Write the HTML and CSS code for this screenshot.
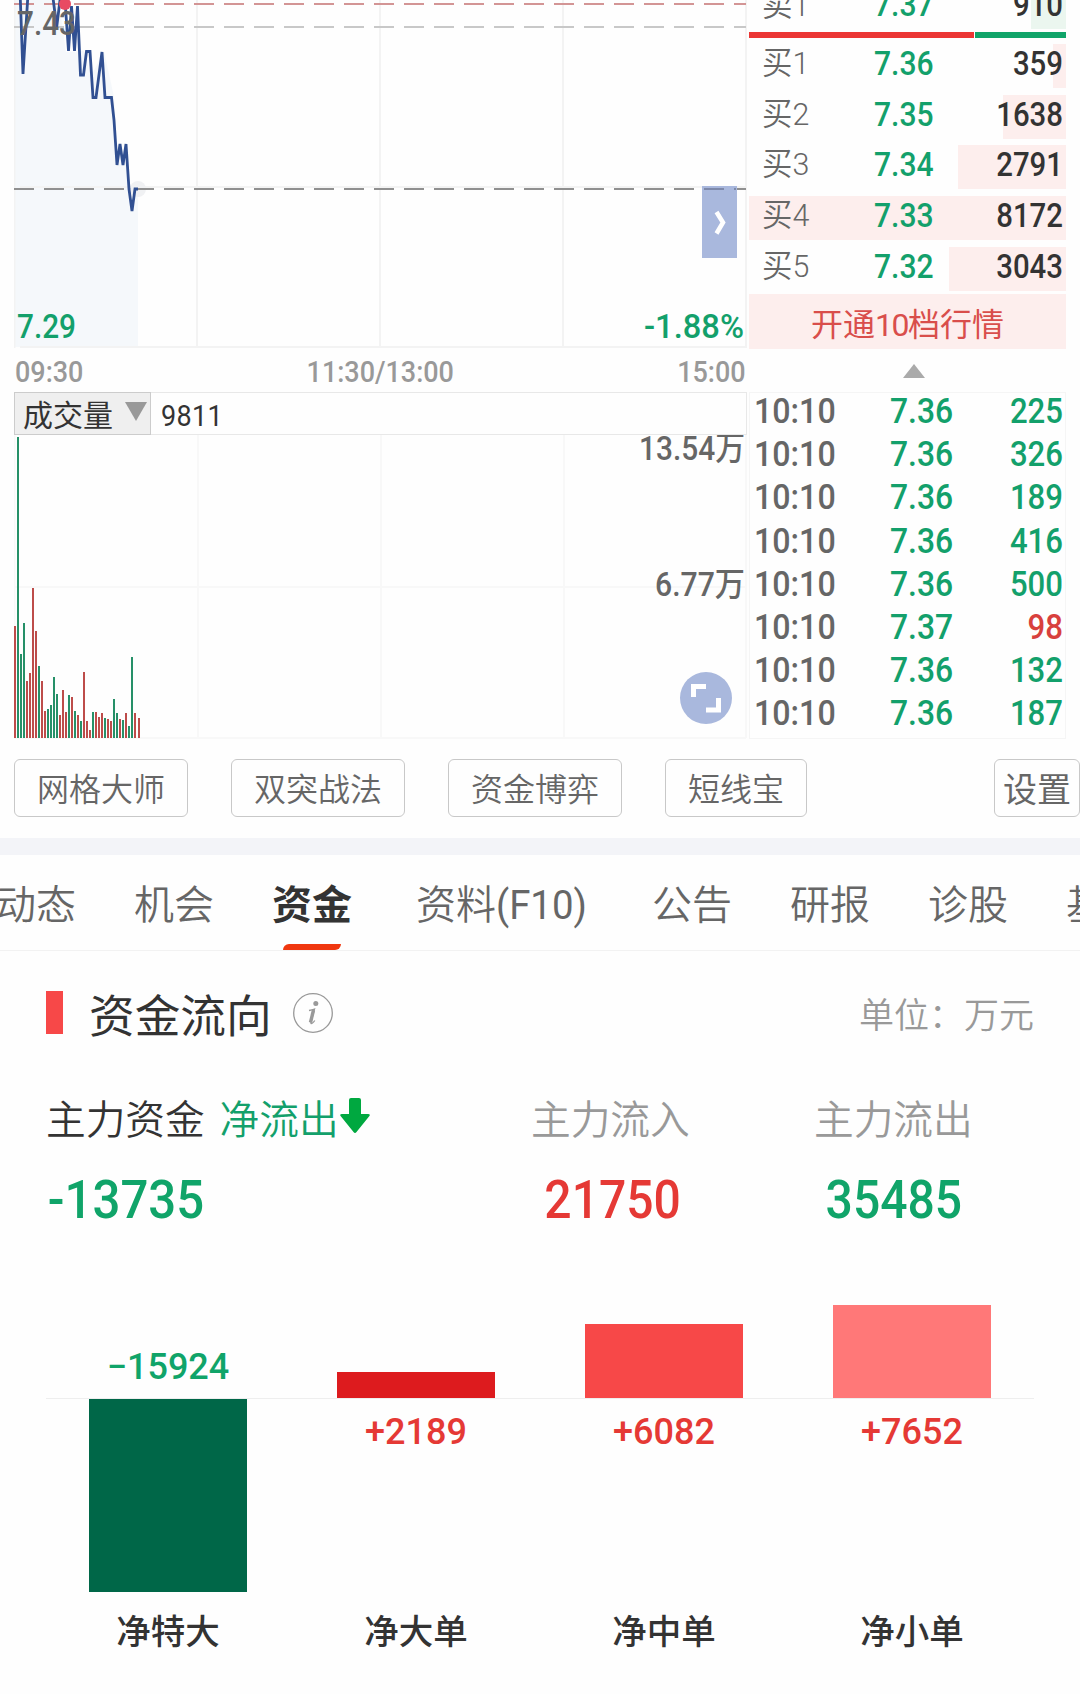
FILE: index.html
```html
<!DOCTYPE html>
<html lang="zh-CN">
<head>
    <meta charset="UTF-8">
    <title>资金流向</title>
    <link rel="stylesheet" href="styles.css">
</head>
<body>
    <div id="quote">
        <div class="charts">
            <svg class="price-chart" width="733" height="349" viewBox="0 0 733 349">
                <path class="area" d="M0 0H42L44 -5L52 52L70 51L77 76L90 51L100 97L104 165L112 144L118 211L124 189V347H0z"/>
                <path class="grid" d="M.5 0V348M183 0V348M366 0V348M549 0V348M732 0V348M6 187H732M6 347H732"/>
                <path class="dash dash-red" d="M0 4H732"/>
                <path class="dash dash-light" d="M0 27H732"/>
                <circle cx="124" cy="189" r="8" fill="#f0f1f3"/>
                <path class="dash dash-dark" d="M0 189H732"/>
                <path class="line" d="M6 -10L9 74L14 -6M38 -10L42.7 27L47 -8M51 0L54.5 51L57.5 6L60.5 51L63.5 6L66.5 75H69.5L72.5 51.5H76L79 97.5H82L88 52L91 97.5H97.5L100 120L103 165L106 144L109 165L112 144L115 189L118 211L121 189H124"/>
                <circle cx="51" cy="4" r="6" fill="#e84a63"/>
                <text class="grey" x="3" y="35" textLength="59" lengthAdjust="spacingAndGlyphs">7.43</text>
                <text class="green" x="3" y="338" textLength="59" lengthAdjust="spacingAndGlyphs">7.29</text>
                <text class="green" x="630" y="338" textLength="100" lengthAdjust="spacingAndGlyphs">-1.88%</text>
                <rect x="688" y="186" width="35" height="72" fill="#a9b8dd"/>
                <path class="dash dash-blue" d="M0 189H732"/>
                <path d="M702.500 212L709 222.500L702.500 233.500" fill="none" stroke="#fff" stroke-width="4.500"/>
            </svg>
            <div class="times">
                <span class="num">09:30</span>
                <span class="num">11:30/13:00</span>
                <span class="num">15:00</span>
            </div>
            <div class="vol-head">
                <div class="vol-select">成交量
                    <svg width="22" height="19" viewBox="0 0 22 19"><path d="M0 0H22L11 19z" fill="#999"/></svg>
                </div>
                <span class="num">9811</span>
            </div>
            <svg class="vol-chart" width="733" height="304" viewBox="0 0 733 304">
                <path class="grid faint" d="M.5 0V303M184 0V303M367 0V303M550 0V303M732 0V303M0 152H732M0 303H732"/>
                <path class="vol-red" d="M1 303v-112M13 303v-57M16 303v-65M19 303v-150M22 303v-107M28 303v-57M31 303v-27M46 303v-23M49 303v-48M52 303v-26M58 303v-41M64 303v-23M70 303v-66M73 303v-17M76 303v-8M82 303v-26M85 303v-21M88 303v-25M94 303v-19M97 303v-17M106 303v-19M112 303v-25M121 303v-25M125 303v-20"/>
                <path class="vol-green" d="M4 303v-301M7 303v-84M10 303v-115M25 303v-72M34 303v-29M37 303v-33M40 303v-61M43 303v-44M55 303v-43M61 303v-27M67 303v-17M79 303v-26M91 303v-20M100 303v-39M103 303v-25M109 303v-18M115 303v-12M118 303v-81"/>
                <text class="grey" x="625" y="25" textLength="106" lengthAdjust="spacingAndGlyphs">13.54万</text>
                <text class="grey" x="641" y="161" textLength="90" lengthAdjust="spacingAndGlyphs">6.77万</text>
                <circle cx="692" cy="263" r="26" fill="#a9b8dd"/>
                <path d="M679.500 262V251.500H692M692 275H704.500V263" fill="none" stroke="#fff" stroke-width="5"/>
            </svg>
        </div>
        <div class="orders">
            <div class="book">
                <div class="level sell"><div class="depth" style="width: 35px"></div><span>卖1</span><b>7.37</b><i>910</i></div>
                <div class="ratio"><div class="ratio-buy"></div><div class="ratio-sell"></div></div>
                <div class="level"><div class="depth" style="width: 13px"></div><span>买1</span><b>7.36</b><i>359</i></div>
                <div class="level"><div class="depth" style="width: 63px"></div><span>买2</span><b>7.35</b><i>1638</i></div>
                <div class="level"><div class="depth" style="width: 108px"></div><span>买3</span><b>7.34</b><i>2791</i></div>
                <div class="level"><div class="depth" style="width: 317px"></div><span>买4</span><b>7.33</b><i>8172</i></div>
                <div class="level"><div class="depth" style="width: 117px"></div><span>买5</span><b>7.32</b><i>3043</i></div>
            </div>
            <div class="open-ten">开通<em>10</em>档行情</div>
            <div class="fold"><svg width="22" height="14" viewBox="0 0 22 14"><path d="M0 14L11 0L22 14z" fill="#aaa"/></svg></div>
            <div class="ticks">
                <div class="tick"><span>10:10</span><b>7.36</b><i>225</i></div>
                <div class="tick"><span>10:10</span><b>7.36</b><i>326</i></div>
                <div class="tick"><span>10:10</span><b>7.36</b><i>189</i></div>
                <div class="tick"><span>10:10</span><b>7.36</b><i>416</i></div>
                <div class="tick"><span>10:10</span><b>7.36</b><i>500</i></div>
                <div class="tick"><span>10:10</span><b>7.37</b><i class="red">98</i></div>
                <div class="tick"><span>10:10</span><b>7.36</b><i>132</i></div>
                <div class="tick"><span>10:10</span><b>7.36</b><i>187</i></div>
            </div>
        </div>
    </div>
    <div id="tools">
        <a>网格大师</a>
        <a>双突战法</a>
        <a>资金博弈</a>
        <a>短线宝</a>
        <a class="setting">设置</a>
    </div>
    <div id="tabs">
        <a>动态</a>
        <a>机会</a>
        <a class="active">资金</a>
        <a>资料<span>(F10)</span></a>
        <a>公告</a>
        <a>研报</a>
        <a>诊股</a>
        <a>基金</a>
    </div>
    <div id="flow">
        <div class="title">
            <div class="mark"></div>
            <h2>资金流向</h2>
            <svg width="42" height="42" viewBox="0 0 42 42">
                <circle cx="21" cy="21" r="19.300" fill="none" stroke="#999" stroke-width="1.300"/>
                <circle cx="23.800" cy="11.500" r="2.500" fill="#999"/>
                <path d="M17 18.500Q20 18 22.500 17L19 30Q18.500 32.300 20.200 31.300Q21.500 30.500 22.800 28.500" fill="none" stroke="#999" stroke-width="1.300"/>
                <path d="M21.500 18L18.500 30.500" fill="none" stroke="#999" stroke-width="3.400"/>
            </svg>
            <span class="unit">单位：万元</span>
        </div>
        <div class="summary">
            <div class="main">
                <p>主力资金 <span class="out">净流出</span><svg width="30" height="36" viewBox="0 0 30 36"><path d="M9 2Q9 0 11 0H19Q21 0 21 2V16H28Q31 16 29 18.500L16.500 34Q15 36 13.500 34L1 18.500Q-1 16 2 16H9z" fill="#00a840"/></svg></p>
                <strong class="down">-13735</strong>
            </div>
            <div class="in">
                <p>主力流入</p>
                <strong class="up">21750</strong>
            </div>
            <div class="outflow">
                <p>主力流出</p>
                <strong class="down">35485</strong>
            </div>
        </div>
        <div class="bars">
            <div class="col">
                <div class="above"><span class="down">−15924</span></div>
                <div class="below"><div class="bar" style="height: 193px; background: #006748"></div></div>
                <div class="name">净特大</div>
            </div>
            <div class="col">
                <div class="above"><div class="bar" style="height: 26px; background: #dd1b1e"></div></div>
                <div class="below"><span class="up">+2189</span></div>
                <div class="name">净大单</div>
            </div>
            <div class="col">
                <div class="above"><div class="bar" style="height: 74px; background: #f74848"></div></div>
                <div class="below"><span class="up">+6082</span></div>
                <div class="name">净中单</div>
            </div>
            <div class="col">
                <div class="above"><div class="bar" style="height: 93px; background: #ff7878"></div></div>
                <div class="below"><span class="up">+7652</span></div>
                <div class="name">净小单</div>
            </div>
        </div>
    </div>
</body>
</html>
```
FILE: styles.css
```css
* {
    box-sizing: border-box;
}
body {
    font-family: "Noto Sans CJK SC", sans-serif;
    font-weight: 350;
    margin: 0;
    width: 1080px;
    height: 1694px;
    overflow: hidden;
    background-color: #fefefe;
    color: #333333;
}
svg {
    display: block;
}
b, i, em {
    font-style: normal;
    font-weight: 500;
}

/* quote charts */
#quote {
    display: flex;
    gap: 2px;
    height: 739px;
    padding-left: 14px;
}
.charts {
    width: 733px;
}
.charts text {
    font-family: Roboto, "Noto Sans CJK SC", sans-serif;
    font-size: 33px;
    font-weight: 500;
}
.charts .grey {
    fill: #666666;
}
.charts .green {
    fill: #13a06b;
}
.area {
    fill: #f5f8fb;
}
.grid {
    fill: none;
    stroke: #f3f3f3;
    stroke-width: 2;
}
.faint {
    stroke: #f8f8f8;
}
.dash {
    fill: none;
    stroke-width: 2;
    stroke-dasharray: 20 10;
}
.dash-red {
    stroke: #d39595;
}
.dash-light {
    stroke: #c8c8c8;
}
.dash-dark {
    stroke: #909090;
}
.dash-blue {
    stroke: #7d89ab;
    clip-path: inset(0 10px 0 688px);
}
.line {
    fill: none;
    stroke: #315092;
    stroke-width: 2.8;
}
.times {
    display: flex;
    justify-content: space-between;
    height: 43px;
    line-height: 47px;
    padding: 0 1px;
    color: #999999;
}
.num {
    font-family: Roboto, sans-serif;
    font-weight: 400;
    font-size: 29px;
    transform: scaleX(0.93);
}
.times .num {
    font-weight: 500;
}
.times .num:first-child {
    transform-origin: left;
}
.times .num:last-child {
    transform-origin: right;
}
.vol-head {
    display: flex;
    align-items: center;
    height: 43px;
    border: 1px solid #e8e8e8;
}
.vol-select {
    display: flex;
    align-items: center;
    justify-content: space-between;
    width: 137px;
    height: 43px;
    margin: -1px 0 -1px -1px;
    padding: 0 3px 1px 8px;
    border: 1px solid #cccccc;
    background-color: #efefef;
    font-size: 30px;
    font-weight: 400;
}
.vol-select svg {
    margin-top: -4px;
}
.vol-head .num {
    margin: 4px 0 0 10px;
    letter-spacing: 0.4px;
    transform: scaleX(0.93);
    transform-origin: left;
}
.vol-red, .vol-green {
    fill: none;
    stroke-width: 2;
}
.vol-red {
    stroke: #bd4c4a;
}
.vol-green {
    stroke: #269068;
}

/* order book */
.orders {
    width: 317px;
}
.book {
    height: 294px;
    display: flex;
    flex-direction: column;
    overflow: hidden;
}
.level {
    position: relative;
    display: grid;
    grid-template-columns: 112px 80px 1fr;
    flex: none;
    height: 44px;
    margin-bottom: 6.7px;
    line-height: 39px;
    padding: 0 3px 0 13px;
    font-size: 33px;
}
.level.sell {
    margin: -15px 0 3px;
    line-height: 40px;
}
.level .depth {
    position: absolute;
    top: 0;
    right: 0;
    height: 44px;
    background-color: #fdeeed;
}
.level.sell .depth {
    background-color: #ebf6ef;
}
.level span, .level b, .level i {
    position: relative;
    white-space: nowrap;
}
.level span {
    font-family: Roboto, "Noto Sans CJK SC", sans-serif;
    font-size: 32px;
    color: #666666;
    transform: scaleX(0.95);
    transform-origin: left;
}
.level b, .tick b {
    color: #13a06b;
    font-family: Roboto, sans-serif;
    transform: scaleX(0.91);
    transform-origin: left;
}
.level i, .tick i {
    font-family: Roboto, sans-serif;
    text-align: right;
    transform: scaleX(0.89);
    transform-origin: right;
}
.ratio {
    display: flex;
    flex: none;
    gap: 1px;
    height: 6px;
    margin-bottom: 6px;
}
.ratio-buy {
    width: 225px;
    background-color: #eb3634;
}
.ratio-sell {
    flex: 1;
    background-color: #10a469;
}
.open-ten {
    height: 55px;
    line-height: 56px;
    background-color: #fdeeed;
    color: #d94e4b;
    font-size: 32px;
    font-weight: 400;
    text-align: center;
}
.open-ten em {
    font-family: Roboto, sans-serif;
    font-weight: 400;
    font-size: 32px;
    letter-spacing: -1.5px;
}
.fold {
    display: flex;
    justify-content: center;
    height: 43px;
    padding: 15px 0 0 13px;
}
.ticks {
    height: 347px;
    border: 1px solid #f5f5f5;
    padding: 0 2px 0 4px;
}
.tick {
    display: grid;
    grid-template-columns: 136px 80px 1fr;
    height: 43.2px;
    line-height: 38px;
    font-family: Roboto, sans-serif;
    font-size: 35px;
}
.tick span {
    color: #666666;
    font-weight: 500;
    transform: scaleX(0.92);
    transform-origin: left;
}
.tick i {
    color: #13a06b;
}
.tick i.red {
    color: #d8403d;
}

/* strategy buttons */
#tools {
    display: flex;
    gap: 43px;
    height: 99px;
    padding: 20px 0 0 14px;
}
#tools a {
    height: 58px;
    line-height: 55px;
    padding: 0 22px;
    border: 1px solid #c8c8c8;
    border-radius: 6px;
    font-size: 32px;
    color: #666666;
}
#tools .setting {
    width: 86px;
    margin-left: auto;
    padding: 0 8px;
    font-size: 34px;
    font-weight: 400;
    white-space: nowrap;
}

/* tabs */
#tabs {
    display: flex;
    height: 113px;
    border-top: 17px solid #f3f4f8;
    border-bottom: 1px solid #f2f2f2;
    line-height: 95px;
    font-size: 40px;
    color: #666666;
    overflow: hidden;
    white-space: nowrap;
}
#tabs a {
    flex: none;
    margin-right: 58px;
}
#tabs a:first-child {
    margin-left: -4px;
}
#tabs .active {
    display: flex;
    flex-direction: column;
    align-items: center;
    color: #333333;
    font-weight: 700;
    margin-right: 64px;
}
#tabs .active::after {
    content: "";
    width: 58px;
    height: 6px;
    margin-top: -6px;
    background-color: #f0370f;
    border-radius: 6px 0 6px 0;
}
#tabs span {
    display: inline-block;
    font-family: Roboto, sans-serif;
    font-weight: 400;
    width: 98px;
    transform: scaleX(0.96);
    transform-origin: left;
}

/* money flow */
#flow {
    padding: 0 44px;
}
.title {
    display: flex;
    align-items: center;
    height: 123px;
    padding: 0 2px;
}
.mark {
    width: 17px;
    height: 43px;
    background-color: #f74848;
}
.title h2 {
    margin: 0 20px 0 26px;
    font-size: 45.700px;
    font-weight: 400;
}
.title .unit {
    margin-left: auto;
    font-size: 35px;
    color: #999999;
}
.summary {
    display: grid;
    grid-template-columns: 485px 283px 1fr;
    height: 209px;
    padding: 15px 0 0 2px;
}
.summary p {
    display: flex;
    margin: 0;
    height: 58px;
    line-height: 56px;
    font-size: 39.700px;
    white-space: pre;
    color: #999999;
}
.summary .main p {
    color: #333333;
}
.summary .out {
    color: #13a06b;
    margin-left: 6px;
}
.summary p svg {
    margin: 9px 0 0 1px;
}
.summary strong {
    display: block;
    font-family: Roboto, sans-serif;
    font-weight: 500;
    font-size: 54px;
    line-height: 106px;
    transform: scaleX(0.89);
    transform-origin: left;
}
.main strong {
    padding-left: 2px;
    transform: scaleX(0.91);
}
.in strong, .outflow strong {
    padding-left: 15px;
}
.outflow strong {
    padding-left: 13px;
}
.down {
    color: #10a469;
}
.up {
    color: #e53935;
}
.bars {
    display: flex;
}
.col {
    width: 248px;
    text-align: center;
}
.above {
    display: flex;
    flex-direction: column;
    align-items: center;
    justify-content: flex-end;
    height: 116px;
    border-bottom: 1px solid #eeeeee;
}
.col:first-child .above {
    margin-left: 2px;
    padding-right: 2px;
}
.col:last-child .above {
    margin-right: 2px;
    padding-left: 2px;
}
.below {
    display: flex;
    flex-direction: column;
    align-items: center;
    height: 206px;
}
.bar {
    width: 158px;
}
.above span, .below span {
    font-family: Roboto, sans-serif;
    font-weight: 500;
    font-size: 36px;
    line-height: 66px;
}
.above span {
    line-height: 62px;
}
.name {
    font-size: 34.500px;
    font-weight: 500;
    line-height: 48px;
}
```
